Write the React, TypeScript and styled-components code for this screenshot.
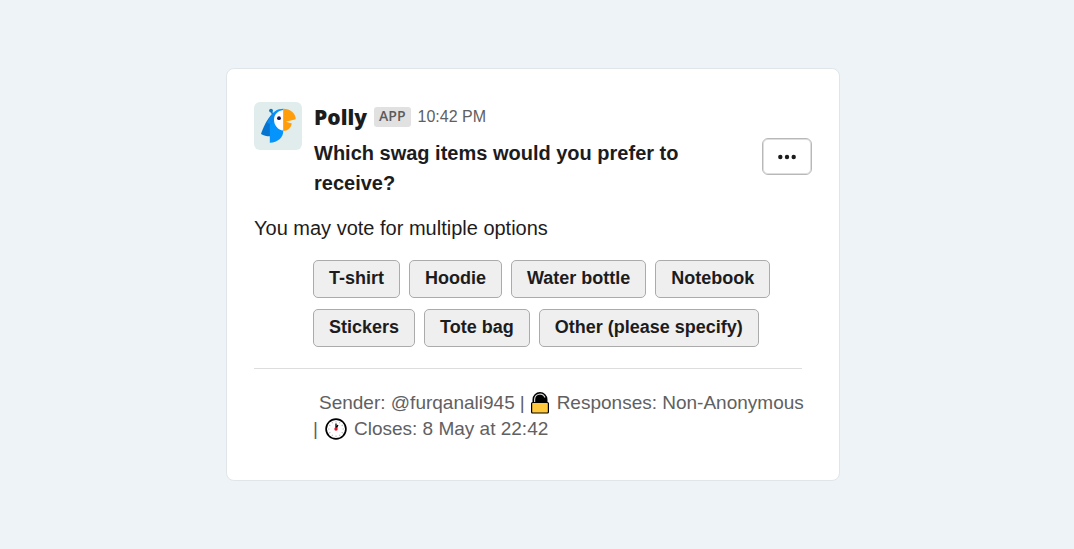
import React from "react";
import styled, { createGlobalStyle } from "styled-components";

const GlobalStyle = createGlobalStyle`
  *, *::before, *::after { box-sizing: border-box; }
  body {
    margin: 0;
    background: #edf3f7;
    color: #1d1c1d;
    font-family: "Liberation Sans", Arial, sans-serif;
  }
`;

const Page = styled.main`
  display: flex;
  flex-direction: column;
  align-items: center;
  justify-content: center;
  min-height: 100vh;
  padding: 24px 8px 24px 0;
`;

const Card = styled.article`
  width: 100%;
  max-width: 614px;
  padding: 33px 27px 38px;
  background: #fff;
  border: 1px solid #dfe5e9;
  border-radius: 8px;
`;

const Header = styled.header`
  display: flex;
  align-items: flex-start;
  gap: 12px;
`;

const Avatar = styled.svg`
  flex: none;
  width: 48px;
  height: 48px;
  border-radius: 6px;
`;

const HeaderBody = styled.div`
  flex: 1;
  min-width: 0;
`;

const Byline = styled.div`
  display: flex;
  align-items: center;
  height: 30px;
  gap: 7px;
`;

const AppName = styled.strong`
  font: 800 21px/30px "Open Sans", sans-serif;
`;

const AppTag = styled.span`
  padding: 0 5px 2px;
  background: #e1e1e1;
  border-radius: 3px;
  color: #5c5b5c;
  font: 600 14px/18px "Open Sans", sans-serif;
`;

const Time = styled.time`
  color: #616061;
  font-size: 16px;
  line-height: 22px;
`;

const QuestionRow = styled.div`
  display: flex;
  align-items: flex-start;
  justify-content: space-between;
  gap: 24px;
  margin-top: 6px;
`;

const Question = styled.h1`
  flex: 1;
  max-width: 400px;
  margin: 0;
  font-size: 20px;
  line-height: 30px;
  font-weight: 700;
`;

const MenuButton = styled.button`
  display: flex;
  align-items: center;
  justify-content: center;
  width: 50px;
  height: 37px;
  padding: 0;
  background: #fff;
  border: 1px solid #b8b8b8;
  border-radius: 6px;
  box-shadow: inset 0 0 0 1px #dedede;
`;

const Hint = styled.p`
  margin: 15px 0 17px;
  font-size: 20px;
  line-height: 30px;
`;

const Options = styled.div`
  display: flex;
  flex-wrap: wrap;
  gap: 11px 9px;
  margin-left: 59px;
`;

const OptionButton = styled.button`
  height: 38px;
  padding: 0 15px 2px;
  background: #efefef;
  border: 1px solid #ababab;
  border-radius: 5px;
  color: #1d1c1d;
  font: 700 18px/24px "Liberation Sans", Arial, sans-serif;
`;

const Divider = styled.hr`
  height: 1px;
  margin: 21px 10px 21px 0;
  border: 0;
  background: #dddddd;
`;

const Footer = styled.footer`
  display: flex;
  flex-wrap: wrap;
  column-gap: 5px;
  padding-left: 59px;
  color: #616061;
  font-size: 19px;
  line-height: 26px;
`;

const Sender = styled.span`
  margin-left: 6px;
`;

const Detail = styled.span`
  display: flex;
  align-items: center;
  gap: 7px;
`;

const Icon = styled.svg`
  flex: none;
  width: 22px;
  height: 22px;
`;

const LockIcon = styled(Icon)`
  width: 20px;
`;

const OPTIONS = [
  "T-shirt",
  "Hoodie",
  "Water bottle",
  "Notebook",
  "Stickers",
  "Tote bag",
  "Other (please specify)",
];

const Parrot = () => (
  <Avatar viewBox="0 0 48 48" role="img" aria-label="Polly">
    <rect width="48" height="48" fill="#e0edec" />
    <path d="M17 8.600 18.500 12l4-1" fill="none" stroke="#0b7fd6" strokeWidth="1.600" />
    <circle cx="17" cy="8.600" r="1.900" fill="#0b79c5" />
    <path d="M18.500 11.500C13 17 9 26 7 32c2.500 1.500 5.500 2.300 9 2.300l4-9Z" fill="#0474d0" />
    <path d="M29.300 6.700C23 6.700 18 10 16.500 16l-.7 8v16.800c8-.5 13.500-5 13.500-12Z" fill="#0494fb" />
    <path d="M19 11.500c-2.500 3-4.500 6-5.800 9.200l4.800 2 4-11Z" fill="#0b8bf0" />
    <path d="M29.300 8c-5.500.8-9.300 4.500-9.300 9.500 0 6 4 10.500 9.300 11Z" fill="#fff" />
    <path d="M29.300 6.700c7 0 12.300 4.300 12.500 10.600l-10 2.500 6 1.700c-.8 4.500-4 7.300-8.500 7.500Z" fill="#ff9d0a" />
    <circle cx="25" cy="16.200" r="1.900" fill="#17154d" />
  </Avatar>
);

const Lock = () => (
  <LockIcon viewBox="0 0 20 22" role="img" aria-label="Locked">
    <path d="M2.500 12V7.500a7.500 7.500 0 0 1 15 0V12Z" fill="#000" />
    <path d="M4.600 10V7.500a5.400 5.400 0 0 1 10.400-2" fill="none" stroke="#d5d5d5" strokeWidth="1.200" />
    <rect x="1.600" y="10.500" width="16.800" height="10.500" rx="1" fill="#ffc83d" stroke="#000" strokeWidth="1.200" />
  </LockIcon>
);

const Clock = () => (
  <Icon viewBox="0 0 22 22" role="img" aria-label="Clock">
    <circle cx="11" cy="11" r="9.900" fill="#fff" stroke="#000" strokeWidth="1.700" />
    <g stroke="#bcbcbc" strokeWidth="1">
      {Array.from({ length: 12 }, (_, i) => (
        <path key={i} d="M11 3v1.500" transform={`rotate(${i * 30} 11 11)`} />
      ))}
    </g>
    <path d="M11 11V5.500M11 11l1.900-4" stroke="#000" strokeWidth="1.300" />
    <circle cx="11" cy="11" r="1.700" fill="#e81224" />
  </Icon>
);

export default function App() {
  return (
    <>
      <GlobalStyle />
      <Page>
        <Card>
          <Header>
            <Parrot />
            <HeaderBody>
              <Byline>
                <AppName>Polly</AppName>
                <AppTag>APP</AppTag>
                <Time dateTime="22:42">10:42 PM</Time>
              </Byline>
              <QuestionRow>
                <Question>Which swag items would you prefer to receive?</Question>
                <MenuButton type="button" aria-label="More actions">
                  <svg width="20" height="6" viewBox="0 0 20 6" fill="#1d1c1d" aria-hidden="true">
                    <circle cx="3.300" cy="3" r="2.200" />
                    <circle cx="10" cy="3" r="2.200" />
                    <circle cx="16.700" cy="3" r="2.200" />
                  </svg>
                </MenuButton>
              </QuestionRow>
            </HeaderBody>
          </Header>
          <Hint>You may vote for multiple options</Hint>
          <Options>
            {OPTIONS.map((label) => (
              <OptionButton key={label} type="button">{label}</OptionButton>
            ))}
          </Options>
          <Divider />
          <Footer>
            <Sender>Sender: @furqanali945</Sender>
            <span>|</span>
            <Detail><Lock />Responses: Non-Anonymous</Detail>
            <Detail><span>|</span><Clock />Closes: 8 May at 22:42</Detail>
          </Footer>
        </Card>
      </Page>
    </>
  );
}
